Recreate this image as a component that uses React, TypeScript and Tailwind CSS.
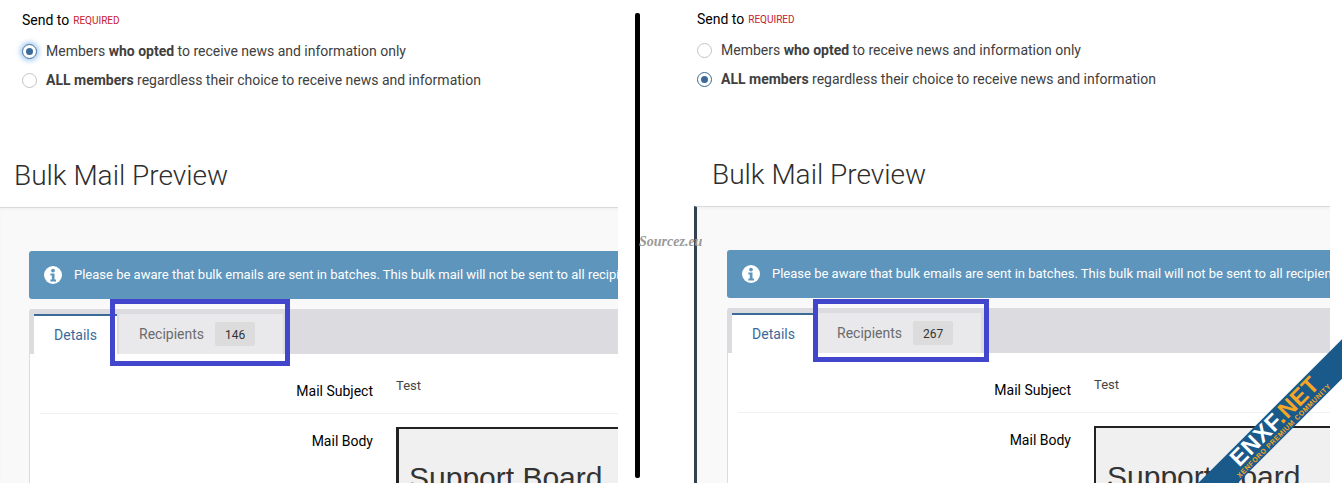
const F = { fontFamily: 'Roboto, "Liberation Sans", sans-serif' };

function Radio({ on }: { on?: boolean }) {
  return (
    <span className={"flex h-[15px] w-[15px] shrink-0 items-center justify-center rounded-full border bg-white " + (on ? "border-[#3b6a9a]" : "border-[#c4c4c4]")}>
      {on && <span className="h-[7px] w-[7px] rounded-full bg-[#3b6a9a]" />}
    </span>
  );
}

function Pane({ pick, count, right }: { pick: number; count: string; right?: boolean }) {
  return (
    <div className={"flex h-[483px] flex-col overflow-hidden " + (right ? "w-[636px]" : "w-[618px]")}>
      <div className={"flex shrink-0 flex-col bg-white " + (right ? "h-[206px] pt-[9px]" : "h-[207px] pt-[10px]")}>
        <div className={"flex items-center text-[14px] leading-[20px] text-black " + (right ? "pl-[3px]" : "pl-[22px]")}>
          Send to <span className="ml-[4px] mt-[2px] text-[10px] uppercase leading-[12px] text-[#c8202f]">Required</span>
        </div>
        <div className={"mt-[11px] flex items-center gap-[9px] text-[14px] leading-[20px] text-[#404040] " + (right ? "pl-[3px]" : "pl-[22px]")}>
          <span className={!right ? "rounded-full shadow-[0_0_5px_2px_rgba(90,160,232,0.55)]" : ""}><Radio on={pick === 0} /></span>
          <span>Members <b className="font-bold">who opted</b> to receive news and information only</span>
        </div>
        <div className={"mt-[9px] flex items-center gap-[9px] text-[14px] leading-[20px] text-[#404040] " + (right ? "pl-[3px]" : "pl-[22px]")}>
          <Radio on={pick === 1} />
          <span><b className="font-bold">ALL members</b> regardless their choice to receive news and information</span>
        </div>
        <h1 className={"mt-[69px] text-[28px] font-light leading-[34px] text-[#2e2e2e] " + (right ? "pl-[18px]" : "pl-[14px]")}>Bulk Mail Preview</h1>
      </div>
      <div className={"flex min-h-0 flex-1 flex-col border-t border-[#d9d9d9] bg-[#f9f9f9] shadow-[inset_0_2px_2px_rgba(0,0,0,0.03)] " + (right ? "border-l-[3px] border-l-[#33424f] pl-[30px] pt-[43px]" : "pl-[29px] pt-[43px]")}>
        <div className="flex h-[48px] shrink-0 items-center gap-[12px] whitespace-nowrap rounded-l-[3px] bg-[#5e95bc] pl-[15px] text-[13px] text-white">
          <svg viewBox="0 0 24 24" className="h-[18px] w-[18px] shrink-0" aria-hidden="true">
            <circle cx="12" cy="12" r="12" fill="#fff" />
            <circle cx="12" cy="6" r="2.5" fill="#5e95bc" />
            <path d="M8.5 10h5.5v8h2v2.5H8.5V18h2v-5.5h-2z" fill="#5e95bc" />
          </svg>
          <span>Please be aware that bulk emails are sent in batches. This bulk mail will not be sent to all recipients at once.</span>
        </div>
        <div className="mt-[10px] flex min-h-0 flex-1 flex-col rounded-tl-[3px] border-l border-[#dcdcdc] bg-white">
          <div className="relative flex h-[45px] shrink-0 items-end bg-[#dcdce0] pl-[4px]">
            <div className="flex h-[40px] w-[83px] items-center justify-center border-t-[2px] border-[#3b6a9a] bg-white text-[14px] text-[#3b6a9a]">Details</div>
            <div className="ml-[2px] flex h-[40px] w-[164px] items-center gap-[11px] bg-[#e9e9eb] pl-[20px] text-[14px] text-[#6b6b6b]">
              <span className="pt-[1px]">Recipients</span>
              <span className="flex h-[24px] w-[40px] items-center justify-center rounded-[2px] bg-[#dcdcdc] pt-[1px] text-[12px] text-[#333]">{count}</span>
            </div>
            <div className={"absolute border-[5px] border-[#4146cc] " + (right ? "left-[85px] top-[-9px] h-[63px] w-[176px]" : "left-[80px] top-[-10px] h-[67px] w-[180px]")} />
          </div>
          <div className="ml-[10px] flex h-[60px] shrink-0 border-b border-[#f0f0f0] pt-[27px] text-[14px] leading-[20px]">
            <span className="w-[333px] text-right text-black">Mail Subject</span>
            <span className="ml-[23px] -mt-[5px] text-[13px] text-[#444]">Test</span>
          </div>
          <div className="ml-[10px] flex pt-[17px] text-[14px] leading-[20px]">
            <span className="w-[333px] shrink-0 text-right text-black">Mail Body</span>
            <div className={"ml-[23px] -mt-[4px] h-[100px] w-[400px] shrink-0 border-t-2 border-[#222] bg-[#f0f0f0] pt-[32px] text-[30px] leading-[34px] text-[#333] " + (right ? "border-l-2 pl-[11px]" : "border-l-[3px] pl-[10px]")} style={{ fontFamily: '"Liberation Sans", sans-serif' }}>
              Support Board
            </div>
          </div>
        </div>
      </div>
    </div>
  );
}

export default function App() {
  return (
    <div className="relative flex h-[483px] w-[1342px] overflow-hidden bg-white" style={F}>
      <Pane pick={0} count="146" />
      <div className="flex w-[76px] shrink-0 pl-[17px] pt-[13px]">
        <div className="h-[465px] w-[5px] rounded-[2px] bg-black" />
      </div>
      <Pane pick={1} count="267" right />
      <div className="absolute left-[639px] top-[234px] text-[14px] font-bold italic leading-[16px] text-[#999]" style={{ fontFamily: '"Liberation Serif", serif' }}>Sourcez.eu</div>
      <div className="absolute left-[1160px] top-[407px] flex h-[28px] w-[240px] origin-center -rotate-[45deg] flex-col items-center justify-center bg-[#1a5a8a] pr-[8px]" style={{ fontFamily: '"Liberation Sans", sans-serif' }}>
        <div className="text-[23px] font-bold leading-[19px] tracking-[0.5px] text-white">ENXF<span className="text-[#f5a623]">.NET</span></div>
        <div className="text-[7px] font-bold uppercase leading-[8px] tracking-[0.6px] text-[#f5a623]">XenForo Premium Community</div>
      </div>
    </div>
  );
}
